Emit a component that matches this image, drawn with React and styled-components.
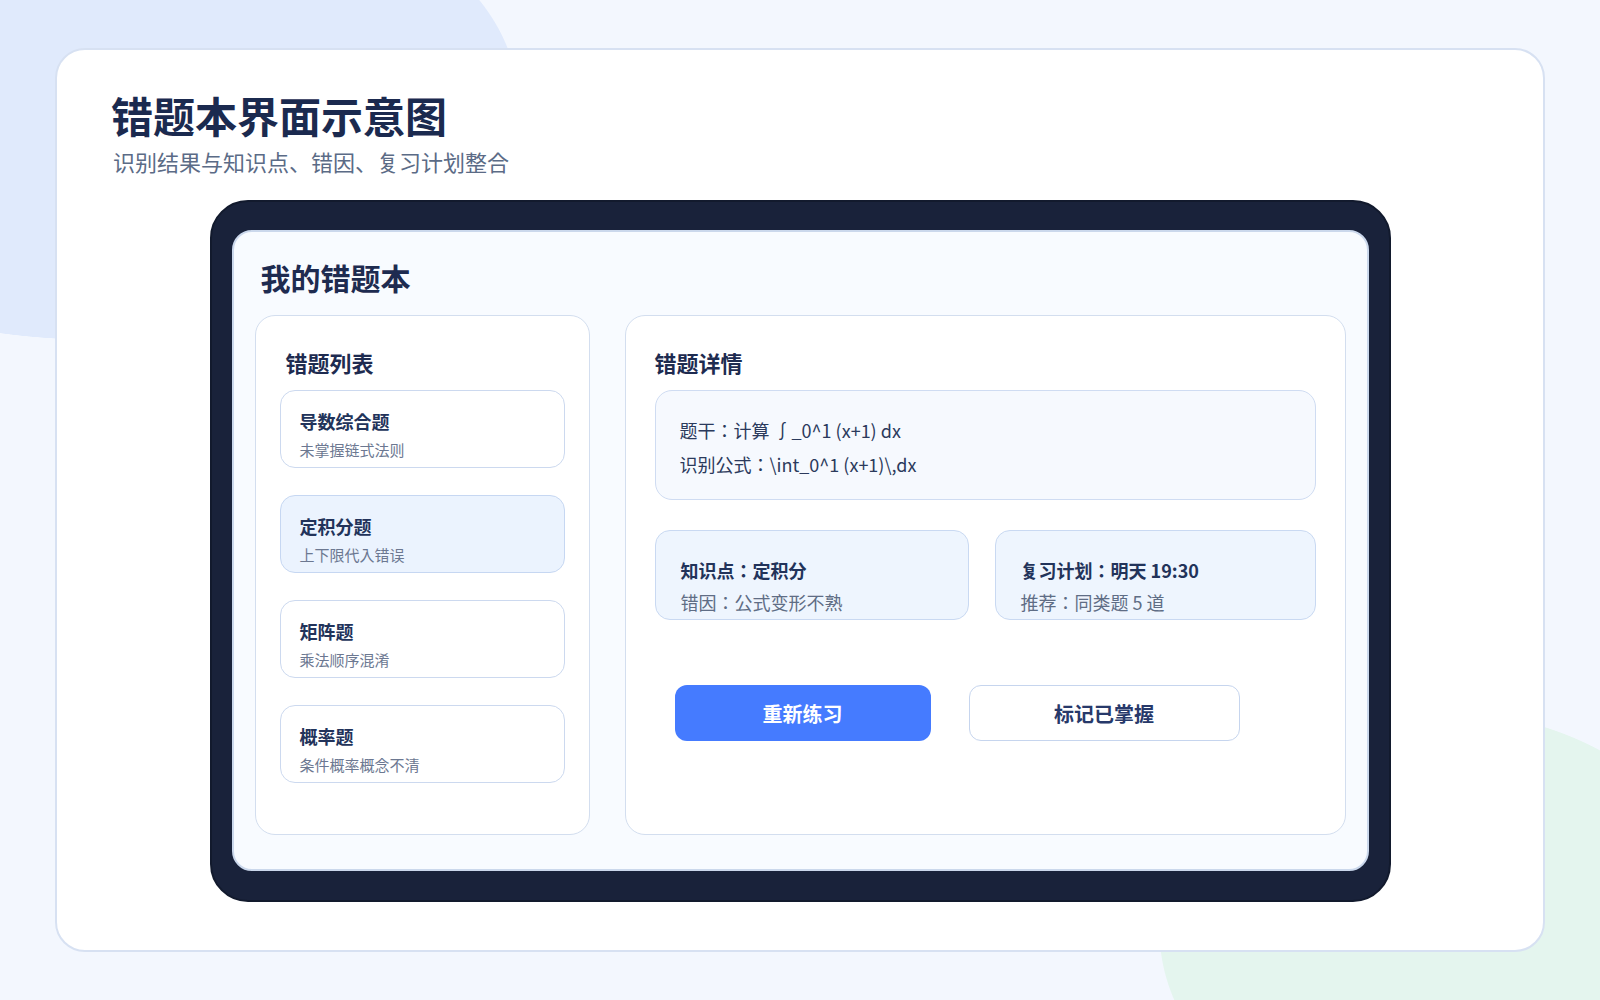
import styled, { createGlobalStyle } from 'styled-components';

const GlobalStyle = createGlobalStyle`
  html, body {
    margin: 0;
    padding: 0;
  }
  body {
    font-family: "Noto Sans CJK JP", "Noto Sans CJK SC", "Noto Sans", sans-serif;
    background:
      radial-gradient(420px 240px at 98px 100px, #e0eafc calc(100% - 1px), rgba(224, 234, 252, 0) 100%),
      radial-gradient(281px 219px at 1440px 930px, #e4f5ee calc(100% - 1px), rgba(228, 245, 238, 0) 100%),
      #f3f7fe;
    background-repeat: no-repeat;
    min-height: 1000px;
  }
  * {
    box-sizing: border-box;
  }
`;

const Page = styled.div`
  height: 1000px;
  padding: 48px 55px;
  display: flex;
`;

const Card = styled.div`
  flex: 1;
  background: #ffffff;
  border: 2px solid #d7e1f2;
  border-radius: 30px;
  padding: 40px 54px 0;
`;

const Title = styled.h1`
  margin: 0;
  font-size: 42px;
  line-height: 50px;
  font-weight: 700;
  color: #1b2a4f;
`;

const Subtitle = styled.p`
  margin: 6px 0 0 2px;
  font-size: 22px;
  line-height: 30px;
  color: #5b6b86;
`;

const Device = styled.div`
  width: 1181px;
  margin: 24px auto 0;
  background: #19223a;
  border: 2px solid #121a2d;
  border-radius: 38px;
  padding: 28px 20px 29px;
`;

const Screen = styled.div`
  background: #f8fbff;
  border: 2px solid #cbd8ec;
  border-radius: 20px;
  padding: 25px 21px 34px;
`;

const ScreenTitle = styled.h2`
  margin: 0 0 18px;
  padding-left: 6px;
  font-size: 30px;
  line-height: 40px;
  font-weight: 700;
  color: #1e2b50;
`;

const Columns = styled.div`
  display: grid;
  grid-template-columns: 335px 1fr;
  gap: 35px;
  height: 520px;
`;

const Panel = styled.section`
  background: #ffffff;
  border: 1px solid #d3deef;
  border-radius: 20px;
  padding: 31px ${(p) => p.$pad}px 0;
`;

const PanelTitle = styled.h3`
  margin: 0 0 12px;
  padding-left: ${(p) => p.$indent || 0}px;
  font-size: 22px;
  line-height: 31px;
  font-weight: 700;
  color: #1e2b50;
`;

const List = styled.div`
  display: flex;
  flex-direction: column;
  gap: 27px;
`;

const Item = styled.div`
  height: 78px;
  border: 1px solid ${(p) => (p.$active ? '#c6d7f2' : '#ccd9ef')};
  background: ${(p) => (p.$active ? '#ebf3fe' : '#ffffff')};
  border-radius: 15px;
  padding: 17px 19px 0;
`;

const ItemTitle = styled.div`
  font-size: 18px;
  line-height: 26px;
  font-weight: 700;
  color: #22335a;
`;

const ItemNote = styled.div`
  margin-top: 5px;
  font-size: 15px;
  line-height: 22px;
  color: #6c7891;
`;

const FormulaBox = styled.div`
  background: #f6f9fe;
  border: 1px solid #cfdcf2;
  border-radius: 17px;
  padding: 22px 24px 18px;
`;

const FormulaLine = styled.div`
  font-size: 18px;
  line-height: 34px;
  color: #2b3a5c;
`;

const InfoRow = styled.div`
  display: grid;
  grid-template-columns: 314px 1fr;
  gap: 26px;
  margin-top: 30px;
`;

const InfoCard = styled.div`
  height: 90px;
  background: #eef5fe;
  border: 1px solid #c9d9f2;
  border-radius: 15px;
  padding: 23px 25px 0;
`;

const InfoMain = styled.div`
  font-size: 18px;
  line-height: 32px;
  font-weight: 700;
  color: #22335a;
`;

const InfoSub = styled.div`
  font-size: 18px;
  line-height: 32px;
  color: #5f6d85;
`;

const Actions = styled.div`
  display: flex;
  gap: 38px;
  margin-top: 65px;
  padding-left: 20px;
`;

const Button = styled.button`
  width: ${(p) => p.$width}px;
  height: 56px;
  border-radius: 12px;
  font-family: inherit;
  font-size: 20px;
  font-weight: 700;
  cursor: pointer;
  border: ${(p) => (p.$primary ? 'none' : '1.5px solid #c6d5ee')};
  background: ${(p) => (p.$primary ? '#457bff' : '#ffffff')};
  color: ${(p) => (p.$primary ? '#ffffff' : '#27396a')};
`;

const mistakes = [
  { title: '导数综合题', note: '未掌握链式法则' },
  { title: '定积分题', note: '上下限代入错误', active: true },
  { title: '矩阵题', note: '乘法顺序混淆' },
  { title: '概率题', note: '条件概率概念不清' },
];

export default function App() {
  return (
    <>
      <GlobalStyle />
      <Page>
        <Card>
          <Title>错题本界面示意图</Title>
          <Subtitle>识别结果与知识点、错因、复习计划整合</Subtitle>
          <Device>
            <Screen>
              <ScreenTitle>我的错题本</ScreenTitle>
              <Columns>
                <Panel $pad={24}>
                  <PanelTitle $indent={6}>错题列表</PanelTitle>
                  <List>
                    {mistakes.map((m) => (
                      <Item key={m.title} $active={m.active}>
                        <ItemTitle>{m.title}</ItemTitle>
                        <ItemNote>{m.note}</ItemNote>
                      </Item>
                    ))}
                  </List>
                </Panel>
                <Panel $pad={29}>
                  <PanelTitle>错题详情</PanelTitle>
                  <FormulaBox>
                    <FormulaLine>题干：计算 ∫_0^1 (x+1) dx</FormulaLine>
                    <FormulaLine>{'识别公式：\\int_0^1 (x+1)\\,dx'}</FormulaLine>
                  </FormulaBox>
                  <InfoRow>
                    <InfoCard>
                      <InfoMain>知识点：定积分</InfoMain>
                      <InfoSub>错因：公式变形不熟</InfoSub>
                    </InfoCard>
                    <InfoCard>
                      <InfoMain>复习计划：明天 19:30</InfoMain>
                      <InfoSub>推荐：同类题 5 道</InfoSub>
                    </InfoCard>
                  </InfoRow>
                  <Actions>
                    <Button $primary $width={256}>重新练习</Button>
                    <Button $width={271}>标记已掌握</Button>
                  </Actions>
                </Panel>
              </Columns>
            </Screen>
          </Device>
        </Card>
      </Page>
    </>
  );
}
